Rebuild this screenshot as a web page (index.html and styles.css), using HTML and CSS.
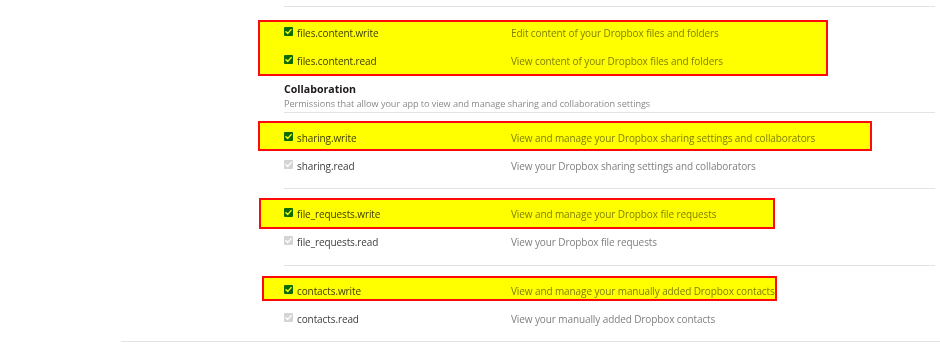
FILE: index.html
```html
<!DOCTYPE html>
<html lang="en">
<head>
<meta charset="utf-8">
<title>Permissions</title>
<link rel="stylesheet" href="styles.css">
</head>
<body>
<div class="page">
  <div class="scopes">
    <div class="divider"></div>

    <div class="group group-first">
      <div class="hl hl-1"></div>
      <div class="row"><span class="cb on"><svg viewBox="0 0 10 10"><path d="M2.2 5.2 L4.2 7.1 L7.9 2.9" /></svg></span><span class="name">files.content.write</span><span class="desc">Edit content of your Dropbox files and folders</span></div>
      <div class="row"><span class="cb on"><svg viewBox="0 0 10 10"><path d="M2.2 5.2 L4.2 7.1 L7.9 2.9" /></svg></span><span class="name">files.content.read</span><span class="desc">View content of your Dropbox files and folders</span></div>
    </div>

    <div class="category">
      <h3 class="cat-title">Collaboration</h3>
      <p class="cat-desc">Permissions that allow your app to view and manage sharing and collaboration settings</p>
    </div>

    <div class="group">
      <div class="hl hl-2"></div>
      <div class="row"><span class="cb on"><svg viewBox="0 0 10 10"><path d="M2.2 5.2 L4.2 7.1 L7.9 2.9" /></svg></span><span class="name">sharing.write</span><span class="desc">View and manage your Dropbox sharing settings and collaborators</span></div>
      <div class="row"><span class="cb off"><svg viewBox="0 0 10 10"><path d="M2.2 5.2 L4.2 7.1 L7.9 2.9" /></svg></span><span class="name">sharing.read</span><span class="desc">View your Dropbox sharing settings and collaborators</span></div>
    </div>

    <div class="group group-mid">
      <div class="hl hl-3"></div>
      <div class="row"><span class="cb on"><svg viewBox="0 0 10 10"><path d="M2.2 5.2 L4.2 7.1 L7.9 2.9" /></svg></span><span class="name">file_requests.write</span><span class="desc">View and manage your Dropbox file requests</span></div>
      <div class="row"><span class="cb off"><svg viewBox="0 0 10 10"><path d="M2.2 5.2 L4.2 7.1 L7.9 2.9" /></svg></span><span class="name">file_requests.read</span><span class="desc">View your Dropbox file requests</span></div>
    </div>

    <div class="group group-last">
      <div class="hl hl-4"></div>
      <div class="row"><span class="cb on"><svg viewBox="0 0 10 10"><path d="M2.2 5.2 L4.2 7.1 L7.9 2.9" /></svg></span><span class="name">contacts.write</span><span class="desc">View and manage your manually added Dropbox contacts</span></div>
      <div class="row"><span class="cb off"><svg viewBox="0 0 10 10"><path d="M2.2 5.2 L4.2 7.1 L7.9 2.9" /></svg></span><span class="name">contacts.read</span><span class="desc">View your manually added Dropbox contacts</span></div>
    </div>
  </div>
</div>
</body>
</html>
```

FILE: styles.css
```css
* { box-sizing: border-box; }

html, body {
  margin: 0;
  padding: 0;
  background: #ffffff;
}

body {
  font-family: "Open Sans", "DejaVu Sans", sans-serif;
  font-size: 10px;
  letter-spacing: -0.1px;
  color: #3d3d3d;
  width: 940px;
  height: 344px;
  overflow: hidden;
}

.page {
  margin-left: 121px;
  border-bottom: 1px solid #e3e3e3;
}

.scopes {
  margin-left: 163px;
  margin-right: 5px;
}

.divider {
  margin-top: 6px;
  border-top: 1px solid #e3e3e3;
}

.group {
  position: relative;
  padding: 11px 0 8px;
  border-bottom: 1px solid #e3e3e3;
}

.group-first {
  padding: 12px 0 0;
  border-bottom: none;
}

.group-mid {
  padding: 11px 0 9px;
}

.group-last {
  padding: 11px 0 8px;
  border-bottom: none;
}

.row {
  display: flex;
  align-items: center;
  height: 28px;
  line-height: 16px;
}

.cb {
  flex: none;
  width: 9px;
  height: 9px;
  border-radius: 1px;
  margin-right: 4px;
  margin-top: -3px;
  display: flex;
}

.cb svg {
  width: 9px;
  height: 9px;
}

.cb path {
  fill: none;
  stroke: #ffffff;
  stroke-width: 1.6;
  stroke-linecap: round;
  stroke-linejoin: round;
}

.cb.on {
  background: #0a6c12;
}

.cb.off {
  background: #d4d4d4;
}

.name {
  width: 214px;
  flex: none;
  color: #3d3d3d;
}

.desc {
  color: #808080;
  white-space: nowrap;
}

.category {
  padding: 6px 0 2px;
  border-bottom: 1px solid #e3e3e3;
}

.cat-title {
  margin: 0;
  font-size: 10.6px;
  line-height: 16px;
  font-weight: 700;
  letter-spacing: 0;
  color: #1e1919;
}

.cat-desc {
  margin: 0;
  font-size: 9.15px;
  line-height: 13px;
  letter-spacing: -0.05px;
  color: #8a8a8a;
}

/* annotation highlight boxes drawn over the rows */
.hl {
  position: absolute;
  background: #ffff00;
  border: 2px solid #ff0a0a;
  mix-blend-mode: multiply;
  pointer-events: none;
}

.hl-1 { top: 13px; left: -26px; width: 570px; height: 56px; }
.hl-2 { top: 8px;  left: -26px; width: 614px; height: 30px; }
.hl-3 { top: 9px;  left: -25px; width: 516px; height: 31px; }
.hl-4 { top: 10px; left: -22px; width: 515px; height: 25px; }
```
